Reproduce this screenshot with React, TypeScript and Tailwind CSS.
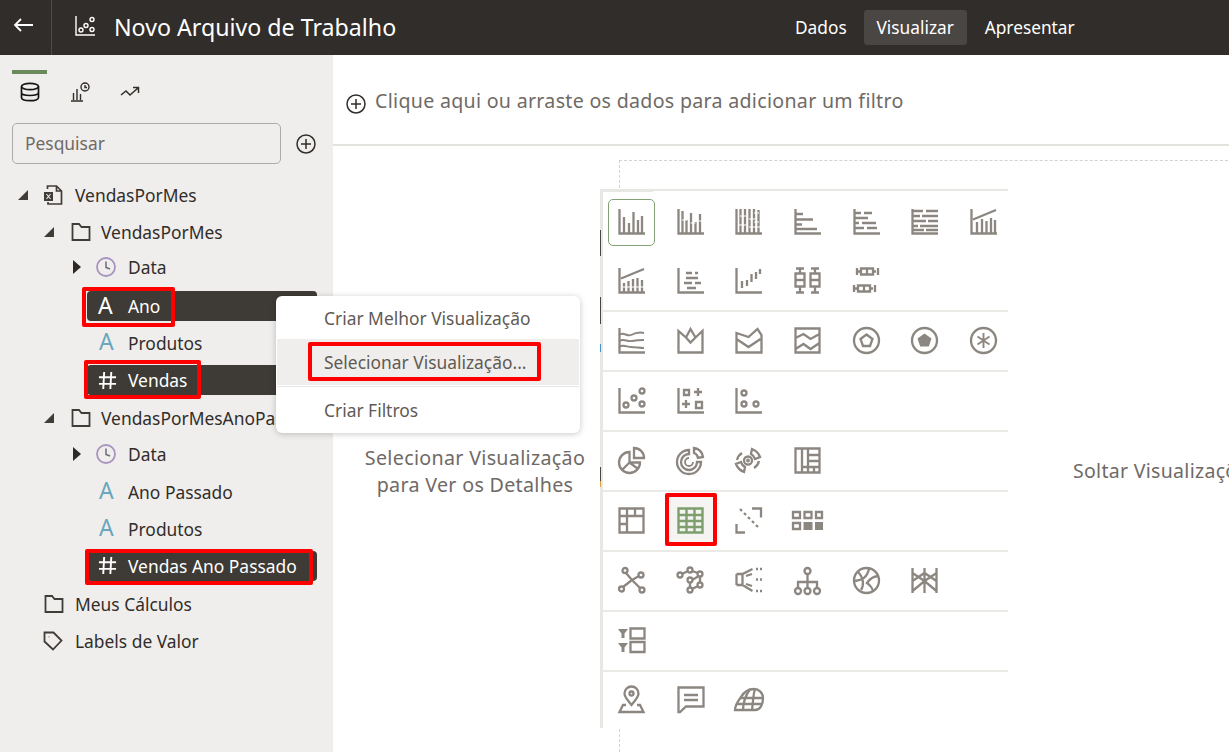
import React from 'react';
import type { ReactNode } from 'react';

const axis = <path d="M1.500 1v24.500H27" />;

// chart type pictures for the picker, all on a 27 box
const charts: Record<string, ReactNode> = {
  bar: <>{axis}<path d="M6 9v16M11 15v10M15.500 4v21M20 12v13M24 8v17" /></>,
  barCluster: <>{axis}<path d="M5.500 3v22M9.500 12v13M14 5v20M18.500 14v11M23 6v19" /><path d="M5 12h5M13.500 15h5M22 13h4" stroke="#fff" strokeWidth="1" /></>,
  barStack: <>{axis}<path d="M5.500 1v24M10 1v24M14.500 1v24M19 1v24M23.500 2v23" /><path d="M5 8h6M14 11h6M4 17h7M14 19h11M19 5h5M19 14h5" stroke="#fff" strokeWidth="1.200" /></>,
  hbar: <>{axis}<path d="M1 6h8M1 11.500h18M1 16.500h7M1 21h22" /></>,
  hbarCluster: <>{axis}<path d="M1 5h7M11 5h8M1 10h14M1 15h5M9 15h14M1 20h10M14 20h10" /></>,
  hbarStack: <>{axis}<path d="M1 3h11M15 3h12M1 8h8M11 8h16M1 13h14M17 13h10M1 18h6M9 18h18M1 22h12M15 22h12" /></>,
  combo: <>{axis}<path d="M7 25V14M12 25V11M16.500 25V13M21 25V10M25 25V12" /><path d="M3 11.500 26 2" /></>,
  comboStack: <>{axis}<path d="M6 25V16M10.500 25V14M15 25V12M19.500 25V11M24 25V13" /><path d="M3 11.500 26 2" /><path d="M5 20h21" stroke="#fff" strokeWidth="1" /></>,
  hbarCenter: <>{axis}<path d="M9 6h6M18 6h3M9 11h12M7 16h8M18 16h6M10 21h9" /></>,
  barFloat: <>{axis}<path d="M7 21v-7M12 19v-6M16.500 15V7M21 12V5M25 7V2" /></>,
  box: <path d="M2 1.500h8M6 1v5M1.500 6.500h9v13h-9zM1.500 13h9M6 20v5M2 25.500h8M17 1.500h8M21 1v5M16.500 6.500h9v13h-9zM16.500 13h9M21 20v5M17 25.500h8" />,
  boxH: <path d="M4 1v7M4 4.500h4M8 1.500h12v6H8zM14 1.500v6M20 4.500h3M25 1v7M1 18v7M1 21.500h4M5 18.500h12v6H5zM11 18.500v6M17 21.500h3M22 18v7" />,
  areaLines: <>{axis}<path d="M1 8c4-4 8 2 12 0s9-3 13-2M1 14c5-3 8 1 13 0s8-1 12-1M1 20c4-3 8 0 12 0s9 1 13 1" strokeWidth="1.900" /></>,
  crown: <path d="M1.500 25.500V4l7.500 6.500L13.500 2l5 8.500L25.500 4v21.500zM9 10.500l4.500 5 5-5" />,
  areaStack: <path d="M1.500 25.500V6l12 4 9-8 4 6v17.500zM1.500 12l12 8 12-8" />,
  areaBox: <path d="M1.500 1.500h24v24h-24zM1.500 11l8-4 7 5 9-5M1.500 22l8-5 7 5 9-6" />,
  radar: <><circle cx="13.500" cy="13.500" r="12.500" /><path d="m13.500 7.500 6 4.500-2.500 7h-7l-2.500-7z" /></>,
  radarFill: <><circle cx="13.500" cy="13.500" r="12.500" /><path d="m13.500 6.500 7 5-2.700 8H9.200l-2.700-8z" fill="currentColor" stroke="none" /></>,
  radarSpoke: <><circle cx="13.500" cy="13.500" r="12.500" /><path d="M13.500 6v15M7.500 9.500l12 8M19.500 9.500l-12 8" strokeWidth="1.900" /></>,
  scatter: <>{axis}<circle cx="8" cy="18" r="2.500" /><circle cx="16" cy="11" r="2.500" /><circle cx="24" cy="4" r="2.500" /><circle cx="24" cy="17" r="2.500" /></>,
  scatterMark: <>{axis}<path d="M7 3h5v5H7zM21 1v8M17 5h8M9 13v8M5 17h8M19 15h6v6h-6z" /></>,
  dots: <>{axis}<circle cx="9" cy="6" r="2.500" /><circle cx="9" cy="17" r="2.500" /><circle cx="21" cy="17" r="2.500" /></>,
  pie: <><path d="M11.500 5A10.500 10.500 0 1 0 22 15.500H11.500zM11.500 15.500 4 23M11.500 15.500l8 6" /><path d="M16 1a10 10 0 0 1 10 10H16z" /></>,
  sunburst: <><path d="M12 3a12 12 0 1 0 12 12h-4a8 8 0 1 1-8-8z" /><path d="M12 11a4 4 0 1 0 4 4" strokeWidth="1.800" /><path d="M17 1a10 10 0 0 1 9 9l-5 1a6 6 0 0 0-4-5z" /></>,
  target: <><circle cx="13" cy="13.500" r="4" /><circle cx="13" cy="13.500" r=".8" /><path d="M17 2a14 14 0 0 1 8 8l-5 2a8 8 0 0 0-4-5zM9 25a14 14 0 0 1-8-8l5-2a8 8 0 0 0 4 5zM2 13a11 11 0 0 1 5-7M24 14a11 11 0 0 1-5 7" /></>,
  treemap: <path d="M1.500 1.500h24v24h-24zM8 1.500v24M14 1.500v24M14 8h11.500M14 14h11.500M8 20h17.500M20 20v5.500" />,
  pivot: <path d="M1.500 1.500h24v24h-24zM1.500 9h24M9 1.500v24M17 1.500V9M1.500 17H9" />,
  grid: <path d="M1.500 1.500h24v24h-24zM1.500 8h24M1.500 14h24M1.500 20h24M9.500 1.500v24M17.500 1.500v24" strokeWidth="2.400" />,
  corr: <path d="M17 1.500h9v9M10 25.500H1.500V17M5 2l2 2m2 2 2 2m2 2 2 2m2 2 2 2m2 2 2 2" />,
  tiles: <><path d="M-1 5h7v6h-7zM10.500 5h7v6h-7zM22 5h6v6h-6zM-1 16h7v6h-7z" /><path d="M9.500 15h9v8h-9zM21 15h8v8h-8z" fill="currentColor" stroke="none" /></>,
  network: <><circle cx="7" cy="3.500" r="2.500" /><circle cx="23" cy="8" r="2.500" /><circle cx="3.500" cy="22" r="2.500" /><circle cx="24" cy="23" r="2.500" /><path d="m8 6 6 7 7-4M14 13l-9 7M14 13l8 8" /></>,
  chord: <><circle cx="13" cy="3" r="2.500" /><circle cx="3" cy="8" r="2.500" /><circle cx="23" cy="7" r="2.500" /><circle cx="13" cy="13" r="2.500" /><circle cx="23" cy="18" r="2.500" /><circle cx="13" cy="23" r="2.500" /><path d="m5 7 6-3M15 4l6 2M23 9.500v6M13 15.500v5M15 22l6-3M15 13l7-4" /></>,
  sankey: <path d="M1.500 7h6L17.500 2M1.500 7v11M1.500 18h6L17.500 24M7.500 7v11M11 9l6-2M11 17l6 2M21 2h2M25 2h2M21 12.500h2M25 12.500h2M21 24h2M25 24h2" />,
  tree: <><circle cx="13.500" cy="4" r="3" /><circle cx="4" cy="24" r="3" /><circle cx="13.500" cy="24" r="3" /><circle cx="23" cy="24" r="3" /><path d="M13.500 7v14M4 21v-6h19v6" /></>,
  chordCircle: <><circle cx="13.500" cy="13.500" r="12.500" /><path d="M5 5c6 6 6 14 3 18M2 14c8-1 12-4 14-12M26 9c-6 0-10 4-12 7 3 2 6 6 6 9" /></>,
  parallel: <path d="M1.500 1v25M13.500 1v25M25.500 1v25M1.500 6l12 8 12-8M1.500 14l12-8 12 8M1.500 24l12-10 12 10" />,
  filterBox: <><path d="M0 2h10L6.500 6.500V11h-3V6.500zM0 16h10l-3.500 4.500V25h-3v-4.500z" fill="currentColor" stroke="none" /><path d="M12.500 1.500h14v10h-14zM12.500 15h14v10h-14z" /></>,
  mapPin: <><path d="M13.500 19c-4-5-7-8-7-11.500a7 7 0 0 1 14 0c0 3.500-3 6.500-7 11.500z" /><circle cx="13.500" cy="7.500" r="2" /><path d="M8 19H5l-3.500 7h24L22 19h-3" /></>,
  comment: <path d="M1.500 1.500h25v19H9l-6 5.500H1.500zM7 9h14M7 14h14" />,
  globe: <><path d="M0 24c0-5 3-9 6-13 3-5 7-8 13-8 5 0 9 4 9 9 0 7-3 12-8 12z" /><path d="M2 18h25M5 12h22M8 24c0-8 3-15 7-21M17 24c1-7 1-15 3-21" /></>,
};

const ChartIcon = ({ name, green }: { name: string; green?: boolean }) => (
  <svg
    viewBox="0 0 27 27"
    fill="none"
    stroke="currentColor"
    strokeWidth="2.300"
    className={`h-[27px] w-[27px] overflow-visible ${green ? 'text-[#7e9f6d]' : 'text-[#8c8680]'}`}
  >
    {charts[name]}
  </svg>
);

const pickerRows = [
  ['bar', 'barCluster', 'barStack', 'hbar', 'hbarCluster', 'hbarStack', 'combo'],
  ['comboStack', 'hbarCenter', 'barFloat', 'box', 'boxH'],
  ['areaLines', 'crown', 'areaStack', 'areaBox', 'radar', 'radarFill', 'radarSpoke'],
  ['scatter', 'scatterMark', 'dots'],
  ['pie', 'sunburst', 'target', 'treemap'],
  ['pivot', 'grid', 'corr', 'tiles'],
  ['network', 'chord', 'sankey', 'tree', 'chordCircle', 'parallel'],
  ['filterBox'],
  ['mapPin', 'comment', 'globe'],
];

const rowClasses = [
  'h-[60px]',
  'h-[61px] border-b-[2px] border-[#eceae7]',
  'h-[60px] pb-[2px] border-b-[2px] border-[#eceae7]',
  'h-[60px] pb-[2px] border-b-[2px] border-[#eceae7]',
  'h-[60px] pb-[2px] border-b-[2px] border-[#eceae7]',
  'h-[60px] pb-[2px] border-b-[2px] border-[#eceae7]',
  'h-[60px] pb-[2px] border-b-[2px] border-[#eceae7]',
  'h-[60px] pb-[2px] border-b-[2px] border-[#eceae7]',
  'h-[55px]',
];

const Caret = ({ open }: { open?: boolean }) =>
  open ? (
    <svg viewBox="0 0 12 12" className="h-3 w-3 text-[#403c37]"><path d="M11 1v10H1z" fill="currentColor" /></svg>
  ) : (
    <svg viewBox="0 0 10 14" className="ml-[2px] h-[14px] w-[10px] text-[#2c2926]"><path d="M1 0l8 7-8 7z" fill="currentColor" /></svg>
  );

const Folder = ({ className = '' }: { className?: string }) => (
  <svg viewBox="0 0 20 20" fill="none" stroke="#403c37" strokeWidth="1.800" className={`h-5 w-5 ${className}`}>
    <path d="M1.500 18V2H8l2.500 3h8v13z" />
  </svg>
);

const Clock = () => (
  <svg viewBox="0 0 20 20" fill="none" stroke="#a794c0" strokeWidth="1.800" className="h-5 w-5">
    <circle cx="10" cy="10" r="9" />
    <path d="M10 4.500V10.500l4 1.500" stroke="#6f6a76" strokeWidth="1.500" />
  </svg>
);

const Sheet = () => (
  <svg viewBox="0 0 20 20" fill="none" stroke="#403c37" strokeWidth="1.700" className="h-5 w-5">
    <path d="M4.500 4V1h9l5 5v13H5v-2M13.500 1v5h5" />
    <path d="M1 7h9v9H1z" fill="#403c37" stroke="none" />
    <path d="m3.500 9 4 5m0-5-4 5" stroke="#f0eeec" strokeWidth="1.100" />
  </svg>
);

const Tag = () => (
  <svg viewBox="0 0 20 20" fill="none" stroke="#403c37" strokeWidth="1.800" className="h-5 w-5">
    <path d="M1.500 1.500h9l8 8-8.500 9-8.500-8zM5.800 5.800h.4" />
  </svg>
);

const AttrA = ({ white }: { white?: boolean }) => (
  <span className={`text-[23px] leading-none ${white ? 'text-white' : 'text-[#6aa6bd]'}`}>A</span>
);

const Hash = () => (
  <svg viewBox="0 0 20 20" fill="none" stroke="#fff" strokeWidth="2" className="h-[19px] w-[19px]">
    <path d="M6.500 1 5.500 19M14 1l-1 18M1 6.500h18M1 13.500h18" />
  </svg>
);

const TreeRow = ({ pad, open, caret, icon, label }: { pad: string; open?: boolean; caret?: boolean; icon: ReactNode; label: string }) => (
  <div className={`flex h-[37.200px] items-center ${pad}`}>
    <span className="flex w-[26px] shrink-0 items-center">{caret && <Caret open={open} />}</span>
    <span className="flex w-[32px] shrink-0 items-center">{icon}</span>
    <span className="whitespace-nowrap text-[#312d2a]">{label}</span>
  </div>
);

const AttrRow = ({ label }: { label: string }) => (
  <TreeRow pad="pl-[70px]" icon={<span className="ml-[3px]"><AttrA /></span>} label={label} />
);

const SelectedRow = ({ icon, label, redBox }: { icon: ReactNode; label: string; redBox: string }) => (
  <div className="flex h-[37.200px] items-center pb-[1px]">
    <div className="relative ml-[87px] flex h-[30px] w-[230px] items-center rounded-[4px] bg-[#3e3a35] pl-[11px] text-white">
      <span className="flex w-[30px] shrink-0 items-center">{icon}</span>
      <span className="whitespace-nowrap">{label}</span>
      <span className={`absolute rounded-[2px] border-[4px] border-[#fe0000] ${redBox}`} />
    </div>
  </div>
);

const Plus = ({ className = '' }: { className?: string }) => (
  <svg viewBox="0 0 20 20" fill="none" stroke="#312d2a" strokeWidth="1.500" className={`h-5 w-5 ${className}`}>
    <circle cx="10" cy="10" r="9" />
    <path d="M10 5v10M5 10h10" />
  </svg>
);

const Sidebar = () => (
  <aside className="flex w-[333px] shrink-0 flex-col bg-[#f0eeec] text-[17.400px]">
    <div className="flex pl-[12px] pt-[15px]">
      <div className="flex h-[37px] w-[35px] flex-col items-center border-t-[4px] border-[#6b8a5c] pt-[8px]">
        <svg viewBox="0 0 20 20" fill="none" stroke="#161513" strokeWidth="1.700" className="h-5 w-5">
          <ellipse cx="10" cy="4.500" rx="8.500" ry="3.200" />
          <path d="M1.500 4.500v11c0 2 3.500 3.200 8.500 3.200s8.500-1.200 8.500-3.200v-11M1.500 10.500c0 2 3.500 3 8.500 3s8.500-1 8.500-3" />
        </svg>
      </div>
      <svg viewBox="0 0 20 20" fill="none" stroke="#312d2a" strokeWidth="1.400" className="ml-[23px] mt-[12px] h-5 w-5">
        <path d="M1 19h12M3.500 18V11M7 18V7M10.500 18v-6" />
        <circle cx="15" cy="5" r="4" />
        <path d="M15 3v2.500h2" />
      </svg>
      <svg viewBox="0 0 20 12" fill="none" stroke="#312d2a" strokeWidth="1.500" className="ml-[30px] mt-[16px] h-[12px] w-[20px]">
        <path d="m1 9 5-4 4 4 8-7M13 1.500h5.500V7" />
      </svg>
    </div>
    <div className="mt-[16px] flex items-center pl-[12px]">
      <div className="flex h-[41px] w-[269px] items-center rounded-[5px] border border-[#aeaaa6] pl-[12px] text-[#6f6a66]">Pesquisar</div>
      <Plus className="ml-[15px]" />
    </div>
    <div className="mt-[12px]">
      <TreeRow pad="pl-[17px]" caret open icon={<Sheet />} label="VendasPorMes" />
      <TreeRow pad="pl-[43px]" caret open icon={<Folder className="ml-[2px]" />} label="VendasPorMes" />
      <TreeRow pad="pb-[3px] pl-[70px]" caret icon={<Clock />} label="Data" />
      <SelectedRow icon={<AttrA white />} label="Ano" redBox="-left-[5px] -top-[4px] h-[40px] w-[93px]" />
      <AttrRow label="Produtos" />
      <SelectedRow icon={<Hash />} label="Vendas" redBox="-left-[3px] -top-[5px] h-[39px] w-[117px]" />
      <TreeRow pad="pl-[43px]" caret open icon={<Folder className="ml-[2px]" />} label="VendasPorMesAnoPassado" />
      <TreeRow pad="pb-[2px] pl-[70px]" caret icon={<Clock />} label="Data" />
      <AttrRow label="Ano Passado" />
      <AttrRow label="Produtos" />
      <SelectedRow icon={<Hash />} label="Vendas Ano Passado" redBox="-left-[2px] -top-[2px] h-[36px] w-[228px]" />
      <TreeRow pad="pl-[17px]" icon={<Folder className="ml-[1px]" />} label="Meus Cálculos" />
      <TreeRow pad="pl-[17px]" icon={<Tag />} label="Labels de Valor" />
    </div>
  </aside>
);

const ContextMenu = () => (
  <div className="absolute left-[276px] top-[296px] z-20 h-[137px] w-[304px] rounded-[6px] bg-white pt-[1px] text-[17.400px] text-[#5f5a55] shadow-[0_1px_6px_rgba(0,0,0,0.22)]">
    <div className="flex h-[42px] items-center pl-[48px]">Criar Melhor Visualização</div>
    <div className="relative mx-[1px] flex h-[46px] items-center bg-[#f0eeec] pl-[47px]">
      Selecionar Visualização...
      <span className="absolute left-[31px] top-[3px] h-[39px] w-[233px] rounded-[2px] border-[4px] border-[#fe0000]" />
    </div>
    <div className="mx-[1px] mt-[1px] h-[1px] bg-[#e8e6e3]" />
    <div className="flex h-[47px] items-center pl-[48px]">Criar Filtros</div>
  </div>
);

const slivers = [
  'top-[39px] h-[26px] bg-[#4a4643]',
  'top-[106px] h-[27px] bg-[#4a4643]',
  'top-[153px] h-[8px] bg-[#4a90c8]',
  'top-[276px] h-[14px] bg-[#4a4643]',
  'top-[290px] h-[6px] bg-[#d9a441]',
];

const Picker = () => (
  <div className="absolute left-[600px] top-[189px] z-10 h-[539px] w-[408px] border-l-[3px] border-t-[2px] border-[#e9e7e4] bg-white">
    <span className="absolute -left-[3px] -top-[2px] h-[3px] w-[53px] bg-[#e9e7e4]" />
    {slivers.map((s) => (
      <span key={s} className={`absolute -left-[3px] w-[1px] ${s}`} />
    ))}
    {pickerRows.map((row, i) => (
      <div key={i} className={`-ml-[1px] grid grid-cols-[repeat(7,58.700px)] ${rowClasses[i]}`}>
        {row.map((name) => (
          <div key={name} className="relative flex items-center justify-center">
            {name === 'bar' && <span className="absolute left-[6px] top-[8px] h-[47px] w-[47px] rounded-[5px] border border-[#83a275]" />}
            {name === 'grid' && <span className="absolute left-[4px] top-[1px] h-[53px] w-[52px] rounded-[2px] border-[4px] border-[#fe0000] bg-[#f5f4f2]" />}
            <span className="relative flex">
              <ChartIcon name={name} green={name === 'grid'} />
            </span>
          </div>
        ))}
      </div>
    ))}
  </div>
);

const App = () => (
  <div className="relative flex h-[752px] w-[1229px] flex-col overflow-hidden bg-white font-['Noto_Sans',sans-serif]">
    <header className="flex h-[55px] shrink-0 items-center bg-[#312d2a] text-white">
      <div className="flex h-full w-[52px] shrink-0 items-center border-r border-[#4f4b47] pb-[5px] pl-[13px]">
        <svg viewBox="0 0 20 14" fill="none" stroke="#fff" strokeWidth="1.800" className="h-[14px] w-5">
          <path d="M20 7H2M8 1 2 7l6 6" />
        </svg>
      </div>
      <svg viewBox="0 0 20 20" fill="none" stroke="#fff" strokeWidth="1.400" className="-mt-[3px] ml-[23px] h-5 w-5">
        <path d="M1 0v19h19" />
        <circle cx="6" cy="14" r="2" />
        <circle cx="11" cy="9.500" r="2" />
        <circle cx="17" cy="3.500" r="2" />
        <circle cx="17" cy="13.500" r="2" />
      </svg>
      <h1 className="ml-[19px] w-[281px] whitespace-nowrap text-[23.200px] font-normal">Novo Arquivo de Trabalho</h1>
      <nav className="ml-[400px] flex items-center text-[17.300px]">
        <span>Dados</span>
        <span className="ml-[17px] flex h-[35px] w-[103px] items-center justify-center rounded-[3px] bg-[#4a4643]">Visualizar</span>
        <span className="ml-[18px]">Apresentar</span>
      </nav>
    </header>
    <div className="flex min-h-0 flex-1">
      <Sidebar />
      <main className="flex min-w-0 flex-1 flex-col">
        <div className="flex h-[91px] shrink-0 items-center border-b-[2px] border-[#e4e2df] pl-[13px] pt-[3px] text-[19.600px] tracking-[0.300px] text-[#6f6a66]">
          <Plus className="mt-[6px]" />
          <span className="ml-[9px]">Clique aqui ou arraste os dados para adicionar um filtro</span>
        </div>
        <div className="flex flex-1">
          <div className="w-[286px] shrink-0 pr-[4px] pt-[298px] text-center text-[19.700px] leading-[27px] tracking-[0.300px] text-[#6f6a66]">
            <p className="-ml-[1px] w-[286px]">Selecionar Visualização<br />para Ver os Detalhes</p>
          </div>
          <div className="mt-[14px] flex-1 whitespace-nowrap border-l border-t border-dashed border-[#d4d2cf] pl-[453px] pt-[295px] text-[19.500px] tracking-[0.300px] text-[#6f6a66]">
            Soltar Visualizações
          </div>
        </div>
      </main>
    </div>
    <ContextMenu />
    <Picker />
  </div>
);

export default App;
